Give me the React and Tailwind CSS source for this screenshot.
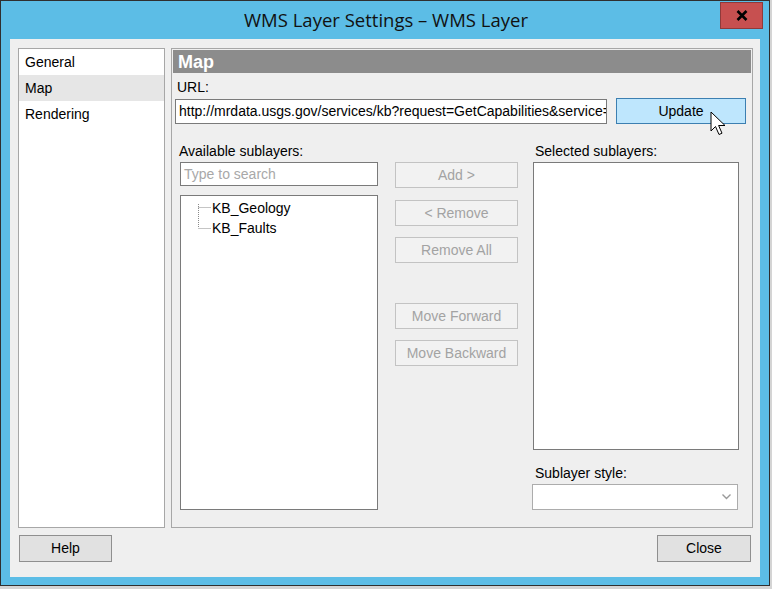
import React from "react";

const font = { fontFamily: '"Liberation Sans", Arial, sans-serif' };

const DisabledButton = ({ children, className = "" }) => (
  <div
    className={`h-[26px] w-[123px] flex items-center justify-center border border-[#c3c3c3] bg-[#f2f2f2] text-[14px] text-[#a3a3a3] ${className}`}
  >
    {children}
  </div>
);

const NavItem = ({ label, active }) => (
  <div
    className={`h-[26px] flex items-center pl-[6px] text-[14px] text-black ${
      active ? "bg-[#e6e6e6]" : ""
    }`}
  >
    {label}
  </div>
);

export default function App() {
  return (
    <div className="w-[772px] h-[589px] bg-[#d4d4d4] overflow-hidden" style={font}>
      <div className="w-[770px] h-[586px] border border-[#2f2f2f] bg-[#5cbde6] flex flex-col">
        {/* title bar */}
        <div className="h-[38px] flex items-start relative shrink-0">
          <div className="flex-1 h-full flex items-center justify-center pl-[2px]">
            <span
              className="text-[18.5px] text-[#111]"
              style={{ fontFamily: '"Open Sans", "Liberation Sans", sans-serif' }}
            >
              WMS Layer Settings – WMS Layer
            </span>
          </div>
          <div className="absolute right-[6px] top-[1px] w-[43px] h-[27px] bg-[#c75050] border border-[#8f3a3a] flex items-center justify-center">
            <svg width="12" height="11" viewBox="0 0 12 11">
              <path d="M1.5 1 L10.5 10 M10.5 1 L1.5 10" stroke="#000" strokeWidth="2.6" />
            </svg>
          </div>
        </div>

        {/* client area */}
        <div className="ml-[9px] w-[750px] h-[538px] bg-[#efefef] flex flex-col pt-[9px] pl-[8px] text-black">
          <div className="flex gap-[6px] h-[480px]">
            {/* nav list */}
            <div className="w-[147px] h-full bg-white border border-[#a7a7a7]">
              <NavItem label="General" />
              <NavItem label="Map" active />
              <NavItem label="Rendering" />
            </div>

            {/* map panel */}
            <div className="w-[582px] h-full border border-[#a7a7a7] flex flex-col">
              <div className="mx-px mt-px h-[23px] bg-[#8c8c8c] flex items-center pl-[5px]">
                <span className="text-[18px] font-bold text-white leading-none">Map</span>
              </div>

              <div className="pl-[3px]">
                <div className="pt-[6px] pl-[2px] text-[14px] leading-[16px]">URL:</div>
                <div className="mt-[4px] flex items-start">
                  <div className="w-[432px] h-[25px] bg-white border border-[#7a7a7a] flex items-center pl-[3px] overflow-hidden whitespace-nowrap text-[14px]">
                    http://mrdata.usgs.gov/services/kb?request=GetCapabilities&amp;service=WMS
                  </div>
                  <div className="relative ml-[9px] -mt-px w-[130px] h-[26px] bg-[#bee6fd] border border-[#3c7fb1] flex items-center justify-center text-[14px]">
                    Update
                    <svg
                      className="absolute left-[93px] top-[12px]"
                      width="17"
                      height="26"
                      viewBox="0 0 17 26"
                    >
                      <path
                        d="M1 1 L1 20 L5.5 15.5 L9 23.5 L12 22.2 L8.6 14.5 L15 14.5 Z"
                        fill="#fff"
                        stroke="#000"
                        strokeWidth="1"
                      />
                    </svg>
                  </div>
                </div>
              </div>

              <div className="mt-[18px] pl-[8px] flex">
                {/* available */}
                <div className="w-[198px] flex flex-col">
                  <div className="h-[20px] -ml-px text-[14px] leading-[16px] pt-px">
                    Available sublayers:
                  </div>
                  <div className="h-[24px] bg-white border border-[#7a7a7a] flex items-center pl-[3px] text-[14px] text-[#a8a8a8]">
                    Type to search
                  </div>
                  <div className="mt-[9px] h-[315px] bg-white border border-[#7a7a7a] pt-px pl-[16px]">
                    <div className="flex">
                      <svg width="15" height="40" viewBox="0 0 15 40" className="shrink-0">
                        <path
                          d="M1.5 7 L1.5 31 M1.5 10.5 L14 10.5 M1.5 31.5 L14 31.5"
                          stroke="#8a8a8a"
                          strokeWidth="1"
                          strokeDasharray="1 1"
                        />
                      </svg>
                      <div className="text-[14px] leading-[20px] pt-px">
                        <div>KB_Geology</div>
                        <div>KB_Faults</div>
                      </div>
                    </div>
                  </div>
                </div>

                {/* buttons */}
                <div className="ml-[17px] w-[123px] pt-[20px] flex flex-col">
                  <DisabledButton>Add &gt;</DisabledButton>
                  <DisabledButton className="mt-[12px]">&lt; Remove</DisabledButton>
                  <DisabledButton className="mt-[11px]">Remove All</DisabledButton>
                  <DisabledButton className="mt-[40px]">Move Forward</DisabledButton>
                  <DisabledButton className="mt-[11px]">Move Backward</DisabledButton>
                </div>

                {/* selected */}
                <div className="ml-[15px] w-[206px] flex flex-col">
                  <div className="h-[20px] pl-[2px] text-[14px] leading-[16px] pt-px">
                    Selected sublayers:
                  </div>
                  <div className="h-[288px] bg-white border border-[#7a7a7a]" />
                  <div className="h-[34px] pt-[15px] pl-[2px] text-[14px] leading-[16px]">
                    Sublayer style:
                  </div>
                  <div className="-ml-px w-[206px] h-[26px] bg-white border border-[#acacac] flex items-center justify-end pr-[6px]">
                    <svg width="9" height="6" viewBox="0 0 9 6">
                      <path d="M0.5 0.5 L4.5 4.5 L8.5 0.5" stroke="#9a9a9a" strokeWidth="1.4" fill="none" />
                    </svg>
                  </div>
                </div>
              </div>
            </div>
          </div>

          {/* bottom buttons */}
          <div className="mt-[7px] flex justify-between pr-[9px] pl-px">
            <div className="w-[93px] h-[27px] bg-[#e1e1e1] border border-[#8f8f8f] flex items-center justify-center text-[14px]">
              Help
            </div>
            <div className="w-[94px] h-[27px] bg-[#e1e1e1] border border-[#8f8f8f] flex items-center justify-center text-[14px]">
              Close
            </div>
          </div>
        </div>
      </div>
    </div>
  );
}
